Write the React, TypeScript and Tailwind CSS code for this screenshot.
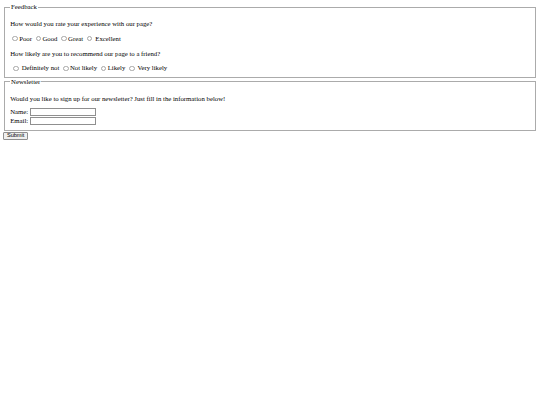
import type { ReactNode } from "react";

function Radio({ name, first }: { name: string; first?: boolean }) {
  return (
    <input
      type="radio"
      name={name}
      className={
        "appearance-none inline-block w-[5.5px] h-[5.5px] rounded-full border-[0.6px] border-[#a6a6a6] bg-white mr-[1.3px] align-[-0.6px] " +
        (first ? "ml-[2.9px]" : "ml-[2.1px]")
      }
    />
  );
}

function Box({ title, children }: { title: string; children: ReactNode }) {
  return (
    <fieldset className="mx-[0.84px] border border-[#ababab] px-[5.06px] pt-[2.36px] pb-[4.22px]">
      <legend className="px-[0.84px] leading-[7.8px]">{title}</legend>
      {children}
    </fieldset>
  );
}

export default function App() {
  return (
    <div
      className="min-h-[405px] bg-white p-[3.375px] text-[6.75px] leading-[7.8px] text-black"
      style={{ fontFamily: '"Liberation Serif", "Times New Roman", serif' }}
    >
      <form onSubmit={(e) => e.preventDefault()}>
        <Box title="Feedback">
          <p className="my-[6.75px]">How would you rate your experience with our page?</p>
          <div className="h-[8.3px] leading-[8.3px]">
            <Radio name="rate" />Poor <Radio name="rate" />Good <Radio name="rate" />Great{" "}
            <Radio name="rate" /> Excellent
          </div>
          <p className="my-[6.75px]">How likely are you to recommend our page to a friend?</p>
          <div className="h-[8.3px] leading-[8.3px]">
            <Radio name="rec" first /> Definitely not <Radio name="rec" />Not likely{" "}
            <Radio name="rec" />Likely <Radio name="rec" /> Very likely
          </div>
        </Box>
        <Box title="Newsletter">
          <p className="mt-[6.75px] mb-[4.8px]">
            Would you like to sign up for our newsletter? Just fill in the information below!
          </p>
          <div className="flex h-[9px] items-center">
            <span className="w-[19.7px]">Name:</span>
            <input type="text" className="h-[8.6px] w-[66px] border border-[#8f8f8f] bg-white" />
          </div>
          <div className="flex h-[9px] items-center">
            <span className="w-[19.7px]">Email:</span>
            <input type="email" className="h-[8.6px] w-[66px] border border-[#8f8f8f] bg-white" />
          </div>
        </Box>
        <button
          type="submit"
          className="mt-[1px] flex h-[8px] w-[24.5px] items-center justify-center rounded-[1px] border border-[#8f8f8f] bg-[#efefef] text-[5.6px] leading-none text-black"
          style={{ fontFamily: '"Liberation Sans", Arial, sans-serif' }}
        >
          Submit
        </button>
      </form>
    </div>
  );
}
